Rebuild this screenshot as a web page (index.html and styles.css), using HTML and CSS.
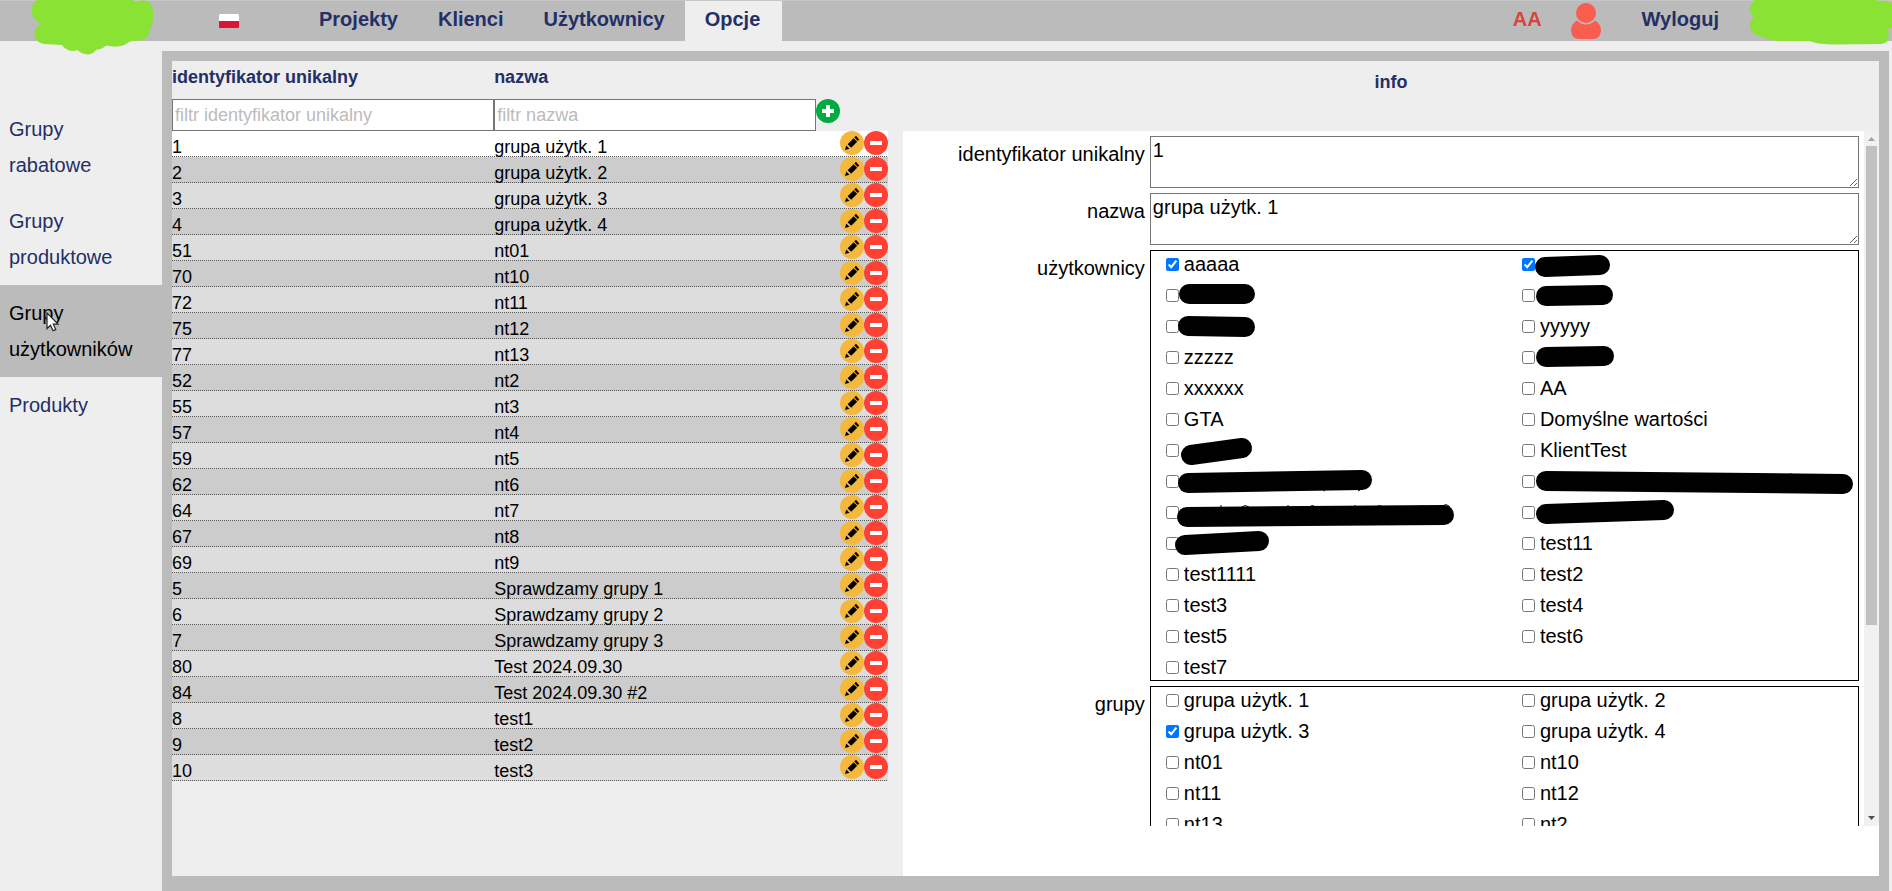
FILE: index.html
```html
<!DOCTYPE html>
<html lang="pl">
<head>
<meta charset="utf-8">
<title>Grupy użytkowników</title>
<link rel="stylesheet" href="styles.css">
</head>
<body>
<svg class="defs" aria-hidden="true">
  <symbol id="edit" viewBox="0 0 24 24">
    <circle cx="12" cy="12" r="12" fill="#f4b93c"/>
    <path d="M5 19l1.200-4.600 3.300 3.300zM7.600 13.200l6-6 3.600 3.600-6 6zM14.300 6.500l1.700-1.700 3.200 3.700-1.400 1.600z"/>
  </symbol>
  <symbol id="remove" viewBox="0 0 24 24">
    <circle cx="12" cy="12" r="12" fill="#ff4033"/>
    <rect x="6" y="10" width="12" height="4" rx="0.500" fill="#fff"/>
  </symbol>
</svg>

<header class="topbar">
  <div class="brand">
    <svg class="blob" width="160" height="56" viewBox="0 0 160 56" aria-hidden="true"><path fill="#8ae234" d="M37 0C31 4 30 13 34 18Q37 23 43 24C36 25 33 32 35 37Q37 43 45 44L62 45Q66 51 74 51L77 50Q82 54 88 54.500Q93 54 96 50Q103 49 106 45.500Q121 49 129 42L132 41Q147 42 149 33L150 29Q153 25 153 17C154 5 150 1 143 0.500Q138 0 135 2L133 0Z"/></svg>
  </div>
  <button class="flag" type="button" aria-label="Polski"><svg width="20" height="14" viewBox="0 0 20 14"><rect width="20" height="14" rx="1" fill="#dc143c"/><path fill="#fff" d="M1 0h18q1 0 1 1v6H0V1q0-1 1-1z"/></svg></button>
  <nav class="menu">
    <a href="#projekty">Projekty</a>
    <a href="#klienci">Klienci</a>
    <a href="#uzytkownicy">Użytkownicy</a>
    <a href="#opcje" class="current">Opcje</a>
  </nav>
  <div class="account">
    <span class="initials">AA</span>
    <svg class="person" width="30" height="36" viewBox="0 0 30 36" fill="#f95d50" aria-hidden="true"><circle cx="15" cy="10" r="10"/><path d="M6 17.500Q10 21.500 15 21.500T24 17.500Q30 21 30 28Q29 36 22 36H8Q1 36 0 28Q0 21 6 17.500z"/></svg>
    <a href="#wyloguj">Wyloguj</a>
  </div>
  <div class="partner">
    <svg class="blob" width="143" height="45" viewBox="0 0 143 45" aria-hidden="true"><path fill="#8ae234" d="M5 0Q-1 7 2 14L5 17Q1 20 1 25Q1 34 10 36L14 37Q20 41 32 41H60Q68 44 82 44.500L132 44Q140 43 139.500 36Q140 31 139 29L143 27V3Q138 0 130 1L127 0Z"/></svg>
  </div>
</header>

<div class="body">
  <nav class="sidebar">
    <a href="#rabatowe">Grupy rabatowe</a>
    <a href="#produktowe">Grupy produktowe</a>
    <a href="#grupy" class="active">Grupy użytkowników
      <svg class="pointer" width="14" height="20" viewBox="0 0 14 20" aria-hidden="true"><path d="M1 1v15.500l3.500-3.300 2.600 5.600 2.700-1.200-2.500-5.400H12z" fill="#fff" stroke="#222" stroke-width="1.200"/></svg>
    </a>
    <a href="#produkty">Produkty</a>
  </nav>

  <main class="panel">
    <section class="list">
      <table>
        <colgroup><col class="wide"><col class="wide"><col><col><col></colgroup>
        <thead>
          <tr><th scope="col">identyfikator unikalny</th><th scope="col">nazwa</th><td colspan="3"></td></tr>
          <tr class="filters">
            <td><input type="text" placeholder="filtr identyfikator unikalny" aria-label="filtr identyfikator unikalny"></td>
            <td><input type="text" placeholder="filtr nazwa" aria-label="filtr nazwa"></td>
            <td><button class="icon" type="button" aria-label="dodaj"><svg viewBox="0 0 24 24"><circle cx="12" cy="12" r="12" fill="#00ac42"/><path fill="#fff" d="M10 6.500q0-.500.500-.500h3q.500 0 .500.500V10h3.500q.500 0 .500.500v3q0 .500-.500.500H14v3.500q0 .500-.500.500h-3q-.500 0-.500-.500V14H6.500q-.500 0-.500-.500v-3q0-.500.500-.500H10z"/></svg></button></td>
            <td></td><td></td>
          </tr>
        </thead>
        <tbody id="rows"></tbody>
      </table>
    </section>

    <section class="info">
      <h2>info</h2>
      <div class="sheet">
        <form class="fields">
          <label for="uid">identyfikator unikalny</label>
          <textarea id="uid" rows="2">1</textarea>
          <label for="name">nazwa</label>
          <textarea id="name" rows="2">grupa użytk. 1</textarea>
          <span class="caption" id="users-caption">użytkownicy</span>
          <div class="checks" id="users" role="group" aria-labelledby="users-caption"></div>
          <span class="caption" id="groups-caption">grupy</span>
          <div class="checks" id="groups" role="group" aria-labelledby="groups-caption"></div>
        </form>
        <div class="scrollbar" aria-hidden="true">
          <svg width="15" height="15" viewBox="0 0 15 15"><path fill="#a3a3a3" d="M4 10h7L7.500 6z"/></svg>
          <div class="track"><div class="thumb"></div></div>
          <svg width="15" height="15" viewBox="0 0 15 15"><path fill="#505050" d="M4 5h7L7.500 9z"/></svg>
        </div>
      </div>
    </section>
  </main>
</div>
<script src="app.js"></script>
</body>
</html>
```
FILE: styles.css
```css
* {
  box-sizing: border-box;
}

body {
  margin: 0;
  height: 100vh;
  display: flex;
  flex-direction: column;
  overflow: hidden;
  background: #eee;
  color: #000;
  font: 20px/23px "Liberation Sans", Arial, sans-serif;
}

a {
  color: #232f66;
  text-decoration: none;
}

button {
  border: 0;
  padding: 0;
  background: none;
  cursor: pointer;
}

.defs {
  display: none;
}

/* top bar */
.topbar {
  display: flex;
  align-items: center;
  height: 41px;
  flex: none;
  border-top: 1px solid #c6c6c6;
  background: #bbb;
  font-weight: bold;
}

.brand {
  position: relative;
  width: 219px;
  align-self: stretch;
}

.partner {
  position: relative;
  width: 143px;
  margin-left: 30px;
  align-self: stretch;
}

.blob {
  position: absolute;
  top: -1px;
  left: 0;
  z-index: 2;
}

.flag,
.flag svg {
  display: block;
}

.menu {
  display: flex;
  align-self: stretch;
  margin-left: 60px;
}

.menu a {
  padding: 7px 20px 0;
}

.menu .current {
  padding-right: 22px;
  background: #eee;
}

.account {
  display: flex;
  align-items: center;
  margin-left: auto;
  align-self: stretch;
}

.account a,
.initials {
  align-self: flex-start;
  padding-top: 7px;
}

.initials {
  color: #d4453b;
}

.person {
  margin: 0 41px 0 29px;
}

/* page body */
.body {
  flex: 1;
  display: flex;
  min-height: 0;
  padding: 10px 3px 0 0;
}

.sidebar {
  width: 162px;
  flex: none;
  padding-top: 50px;
  line-height: 36px;
}

.sidebar a {
  display: block;
  position: relative;
  padding: 10px 20px 10px 9px;
}

.sidebar .active {
  background: #bbb;
  color: #000;
}

.pointer {
  position: absolute;
  left: 46px;
  top: 27px;
}

.panel {
  flex: 1;
  min-width: 0;
  display: grid;
  grid-template-columns: 11fr 15fr;
  grid-template-rows: minmax(0, 1fr);
  gap: 15px;
  border: 10px solid #bbb;
  border-bottom-width: 15px;
}

/* list */
.list table {
  width: 100%;
  table-layout: fixed;
  border-spacing: 0;
  font-size: 18px;
  line-height: 20px;
}

.wide {
  width: 45%;
}

.list th,
.list td {
  padding: 0;
  text-align: left;
  vertical-align: bottom;
}

.list th {
  height: 38px;
  padding-bottom: 12px;
  color: #232f66;
}

.filters input {
  display: block;
  width: 100%;
  height: 32px;
  padding: 0 2px;
  border: 1px solid #767676;
  background: #fff;
  font: inherit;
}

.filters input::placeholder {
  color: #bbb;
}

.filters td {
  vertical-align: top;
}

.list tbody td {
  height: 26px;
  padding-bottom: 1px;
  line-height: 18px;
}

.list tbody td.act {
  vertical-align: top;
}

.list tbody tr {
  background: repeating-linear-gradient(90deg, #555 0 1px, transparent 1px 2px) left bottom / 100% 1px no-repeat #ddd;
}

.list tbody tr:nth-child(even) {
  background-color: #ccc;
}

.list tbody tr.selected {
  background-color: #fff;
}

.icon,
.icon svg {
  display: block;
  width: 24px;
  height: 24px;
}

/* info */
.info {
  display: flex;
  flex-direction: column;
  min-width: 0;
}

.info h2 {
  margin: 0;
  padding: 10px 0 37px;
  color: #232f66;
  font-size: 18px;
  text-align: center;
}

.sheet {
  flex: 1;
  min-height: 0;
  display: flex;
  padding-bottom: 50px;
  background: #fff;
}

.fields {
  flex: 1;
  overflow-y: auto;
  scrollbar-width: none;
  display: grid;
  grid-template-columns: 237px 1fr;
  align-content: start;
  gap: 5px;
  padding: 5px;
}

.scrollbar {
  width: 15px;
  display: flex;
  flex-direction: column;
  background: #f1f1f1;
}

.scrollbar svg {
  display: block;
  flex: none;
}

.track {
  flex: 1;
  padding: 0 2px;
}

.thumb {
  height: 72%;
  background: #c1c1c1;
}

.fields > label,
.caption {
  padding-top: 7px;
  text-align: right;
}

.fields textarea {
  display: block;
  width: 100%;
  height: 52px;
  padding: 2px;
  border: 1px solid #767676;
  font: inherit;
}

.checks {
  display: grid;
  grid-template-columns: 1fr 1fr;
  gap: 8px 20px;
  padding: 2px 0 1px 15px;
  border: 1px solid #000;
}

.checks label {
  display: flex;
  align-items: center;
  gap: 5px;
  height: 23px;
  min-width: 0;
}

.checks input {
  width: 13px;
  height: 13px;
  margin: 0;
}

.mark {
  width: 80px;
  height: 23px;
  overflow: visible;
  fill: none;
  stroke: #000;
}

.mark .bar {
  stroke-width: 20px;
  stroke-linecap: round;
}
```
FILE: app.js
```js
const rows = [
  [1, "grupa użytk. 1"], [2, "grupa użytk. 2"], [3, "grupa użytk. 3"], [4, "grupa użytk. 4"],
  [51, "nt01"], [70, "nt10"], [72, "nt11"], [75, "nt12"], [77, "nt13"], [52, "nt2"],
  [55, "nt3"], [57, "nt4"], [59, "nt5"], [62, "nt6"], [64, "nt7"], [67, "nt8"], [69, "nt9"],
  [5, "Sprawdzamy grupy 1"], [6, "Sprawdzamy grupy 2"], [7, "Sprawdzamy grupy 3"],
  [80, "Test 2024.09.30"], [84, "Test 2024.09.30 #2"], [8, "test1"], [9, "test2"], [10, "test3"]
];

// A string is a visible name; an array holds the ends of a bar that covers the name.
const users = [
  "aaaaa", [5, 14, 60, 12],
  [5, 10, 61, 10], [6, 12, 63, 11],
  [4, 11, 61, 12], "yyyyy",
  "zzzzz", [6, 11, 64, 10],
  "xxxxxx", "AA",
  "GTA", "Domyślne wartości",
  [7, 16, 58, 9], "KlientTest",
  [4, 13, 178, 10, "M139 20l2 1M174 21l2-1"], [6, 11, 303, 14, "M250 4h2M279 5h6M289 5h6"],
  [3, 16, 260, 14, "M37 4v3M104 4v3M171 4v3M238 4v3M58 6q3-3 7 0M125 6q3-3 7 0M192 6q3-3 7 0M259 5q3-3 7 1"], [6, 13, 124, 9],
  [1, 13, 75, 9], "test11",
  "test1111", "test2",
  "test3", "test4",
  "test5", "test6",
  "test7"
];

const button = (icon, label) =>
  `<td class="act"><button class="icon" type="button" aria-label="${label}"><svg><use href="#${icon}"/></svg></button></td>`;

document.getElementById("rows").innerHTML = rows.map(([id, name], i) =>
  `<tr${i === 0 ? ' class="selected"' : ""}><td>${id}</td><td colspan="2">${name}</td>${button("edit", "edytuj")}${button("remove", "usuń")}</tr>`
).join("");

const bar = ([x1, y1, x2, y2, extra]) =>
  `<svg class="mark" aria-hidden="true"><path class="bar" d="M${x1} ${y1}L${x2} ${y2}"/>${extra ? `<path d="${extra}"/>` : ""}</svg>`;

const check = (item, on) =>
  `<label><input type="checkbox"${on ? " checked" : ""}>${typeof item === "string" ? `<span>${item}</span>` : bar(item)}</label>`;

document.getElementById("users").innerHTML = users.map((u, i) => check(u, i < 2)).join("");
document.getElementById("groups").innerHTML = rows.map(([, name], i) => check(name, i === 2)).join("");
```
